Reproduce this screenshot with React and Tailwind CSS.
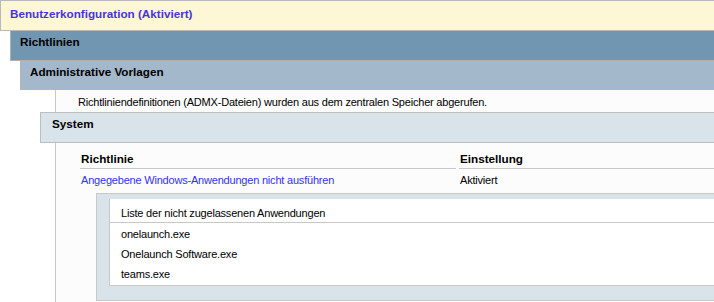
export default function App() {
  const font = { fontFamily: '"Liberation Sans", Arial, sans-serif' };
  const reg = "text-[11px] tracking-[-0.2px] leading-[14px]";
  const bold = "text-[11.7px] font-bold leading-[14px]";
  return (
    <div className="w-[714px] h-[302px] overflow-hidden bg-white text-black" style={font}>
      <div className={`h-[31px] bg-[#fdf7d6] border-t border-l border-b border-[#b9b9b9] pl-[9px] pt-[6px] text-[#4634e0] ${bold}`}>
        Benutzerkonfiguration (Aktiviert)
      </div>
      <div className="pl-[10px]">
        <div className={`h-[30px] bg-[#7196b1] border-l border-b border-[#b0b0b0] pl-[9px] pt-[4px] ${bold}`}>
          Richtlinien
        </div>
        <div className="pl-[10px]">
          <div className={`h-[29px] bg-[#a3b8cb] border-l border-b border-[#b5b5b5] pl-[9px] pt-[4px] ${bold}`}>
            Administrative Vorlagen
          </div>
          <div className={`ml-[35px] border-l border-[#c8c8c8] bg-[#fcfcfc] h-[22px] pl-[22px] pt-[5px] ${reg}`}>
            Richtliniendefinitionen (ADMX-Dateien) wurden aus dem zentralen Speicher abgerufen.
          </div>
          <div className="ml-[20px]">
            <div className={`h-[31px] bg-[#d9e3ea] border-t border-b border-l border-[#bdbdbd] pl-[11px] pt-[4px] ${bold}`}>
              System
            </div>
            <div className="ml-[15px] border-l border-[#c8c8c8] bg-[#fcfcfc] pt-[9px] pl-[24px] h-[200px]">
              <div className="flex">
                <div className={`w-[376px] border-b border-[#c8c8c8] pl-[1px] pb-[2px] ${bold}`}>Richtlinie</div>
                <div className={`ml-[3px] flex-1 border-b border-[#c8c8c8] pl-[1px] pb-[2px] ${bold}`}>Einstellung</div>
              </div>
              <div className={`flex h-[24px] pt-[4px] ${reg}`}>
                <div className="w-[379px] pl-[1px] text-[#3232f0]">Angegebene Windows-Anwendungen nicht ausführen</div>
                <div className="pl-[1px]">Aktiviert</div>
              </div>
              <div className={`ml-[16px] border-t border-l border-b border-[#c8c8c8] bg-[#d9e3ea] pt-[5px] pl-[12px] pb-[14px] ${reg}`}>
                <div className="bg-white border-l border-b border-[#c8c8c8]">
                  <div className="h-[24px] border-b border-[#c8c8c8] pl-[11px] pt-[7px]">
                    Liste der nicht zugelassenen Anwendungen
                  </div>
                  <div className="h-[20px] pl-[11px] pt-[4px]">onelaunch.exe</div>
                  <div className="h-[20px] pl-[11px] pt-[4px]">Onelaunch Software.exe</div>
                  <div className="h-[20px] pl-[11px] pt-[4px]">teams.exe</div>
                  <div className="h-[2px]"></div>
                </div>
              </div>
            </div>
          </div>
        </div>
      </div>
    </div>
  );
}
